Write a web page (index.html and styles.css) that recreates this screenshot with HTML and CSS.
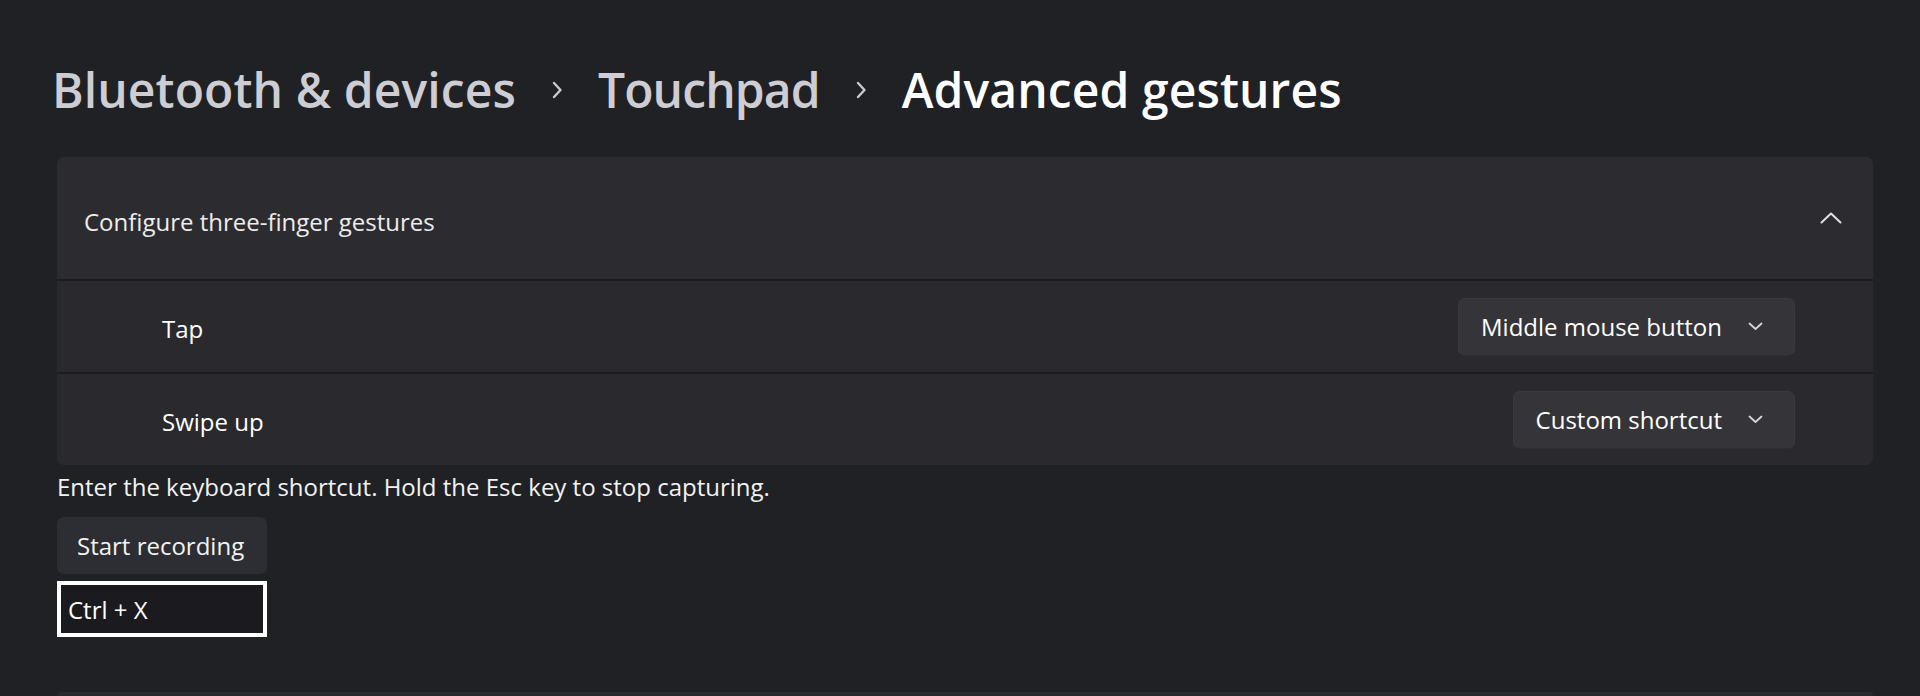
FILE: index.html
```html
<!DOCTYPE html>
<html lang="en">
<head>
<meta charset="utf-8">
<title>Advanced gestures</title>
<link rel="stylesheet" href="styles.css">
</head>
<body>
<main class="page">
  <nav class="breadcrumb">
    <span class="crumb">Bluetooth &amp; devices</span>
    <svg class="crumb-sep" width="12" height="20" viewBox="0 0 12 20"><path d="M3 3 L9.5 10 L3 17" fill="none" stroke="currentColor" stroke-width="2.4" stroke-linecap="round" stroke-linejoin="round"/></svg>
    <span class="crumb tight">Touchpad</span>
    <svg class="crumb-sep" width="12" height="20" viewBox="0 0 12 20"><path d="M3 3 L9.5 10 L3 17" fill="none" stroke="currentColor" stroke-width="2.4" stroke-linecap="round" stroke-linejoin="round"/></svg>
    <span class="crumb current">Advanced gestures</span>
  </nav>

  <section class="expander">
    <div class="expander-header">
      <span class="expander-title">Configure three-finger gestures</span>
      <svg class="chev-up" width="22" height="12" viewBox="0 0 22 12"><path d="M1.5 10.5 L11 1.5 L20.5 10.5" fill="none" stroke="currentColor" stroke-width="2" stroke-linecap="round" stroke-linejoin="round"/></svg>
    </div>
    <div class="setting-row">
      <span class="setting-label">Tap</span>
      <button class="combo">Middle mouse button<svg class="chev-down" width="15" height="9" viewBox="0 0 15 9"><path d="M1.5 1.5 L7.5 7 L13.5 1.5" fill="none" stroke="currentColor" stroke-width="1.8" stroke-linecap="round" stroke-linejoin="round"/></svg></button>
    </div>
    <div class="setting-row">
      <span class="setting-label">Swipe up</span>
      <button class="combo">Custom shortcut<svg class="chev-down" width="15" height="9" viewBox="0 0 15 9"><path d="M1.5 1.5 L7.5 7 L13.5 1.5" fill="none" stroke="currentColor" stroke-width="1.8" stroke-linecap="round" stroke-linejoin="round"/></svg></button>
    </div>
  </section>

  <p class="hint">Enter the keyboard shortcut. Hold the Esc key to stop capturing.</p>
  <button class="record">Start recording</button>
  <div class="shortcut-box">Ctrl + X</div>

  <section class="next-card"></section>
</main>
</body>
</html>
```

FILE: styles.css
```css
* { box-sizing: border-box; }

html, body {
  margin: 0;
  height: 100%;
  overflow: hidden;
}

body {
  background: #202125;
  color: #ffffff;
  font-family: "Open Sans", "Noto Sans", sans-serif;
  font-size: 24px;
}

.page {
  height: 100%;
  padding: 60px 47px 0 57px;
  display: flex;
  flex-direction: column;
  align-items: flex-start;
}

.breadcrumb {
  display: flex;
  align-items: center;
  gap: 35px;
  height: 60px;
  margin-left: -5px;
  font-size: 48px;
  font-weight: 600;
  line-height: 60px;
  letter-spacing: 0.1px;
}

.crumb { color: #cdcdd3; }
.crumb.tight { letter-spacing: -0.9px; }
.crumb.current { color: #ffffff; }
.crumb-sep { color: #c9c9ce; flex: none; }

.expander {
  align-self: stretch;
  margin-top: 37px;
  border-radius: 7px;
  overflow: hidden;
  background: #2a2a2e;
}

.expander-header {
  height: 124px;
  display: flex;
  align-items: center;
  justify-content: space-between;
  padding: 6px 31px 0 27px;
  background: #2c2c30;
  border-bottom: 2px solid #1c1c1f;
  color: #ececec;
}

.chev-up { color: #e0e0e0; margin-top: -6px; }

.setting-row {
  height: 91px;
  display: flex;
  align-items: center;
  justify-content: space-between;
  padding: 4px 78px 0 105px;
  color: #ffffff;
}

.setting-row + .setting-row { border-top: 2px solid #1c1c1f; height: 93px; }

.combo {
  display: flex;
  align-items: center;
  height: 58px;
  margin-top: -4px;
  padding: 0 31px 0 22px;
  gap: 26px;
  background: #353539;
  border: 1px solid #3a3a3e;
  border-bottom-color: #303034;
  border-radius: 7px;
  color: #ffffff;
  font-family: inherit;
  font-size: 24px;
}

.chev-down { color: #d6d6d6; flex: none; }

.hint {
  margin: 4px 0 0 0;
  line-height: 36px;
  color: #f2f2f2;
}

.record {
  margin-top: 12px;
  width: 210px;
  height: 57px;
  padding: 0 0 0 20px;
  text-align: left;
  background: #2d2e33;
  border: none;
  border-radius: 7px;
  color: #f2f2f2;
  font-family: inherit;
  font-size: 24px;
}

.shortcut-box {
  margin-top: 7px;
  width: 210px;
  height: 56px;
  padding: 4px 0 0 7px;
  border: 4px solid #ffffff;
  background: #1b1b1f;
  color: #ffffff;
  line-height: 42px;
}

.next-card {
  align-self: stretch;
  flex: 1;
  margin-top: 55px;
  background: #2a2a2e;
  border-radius: 7px 7px 0 0;
}
```
